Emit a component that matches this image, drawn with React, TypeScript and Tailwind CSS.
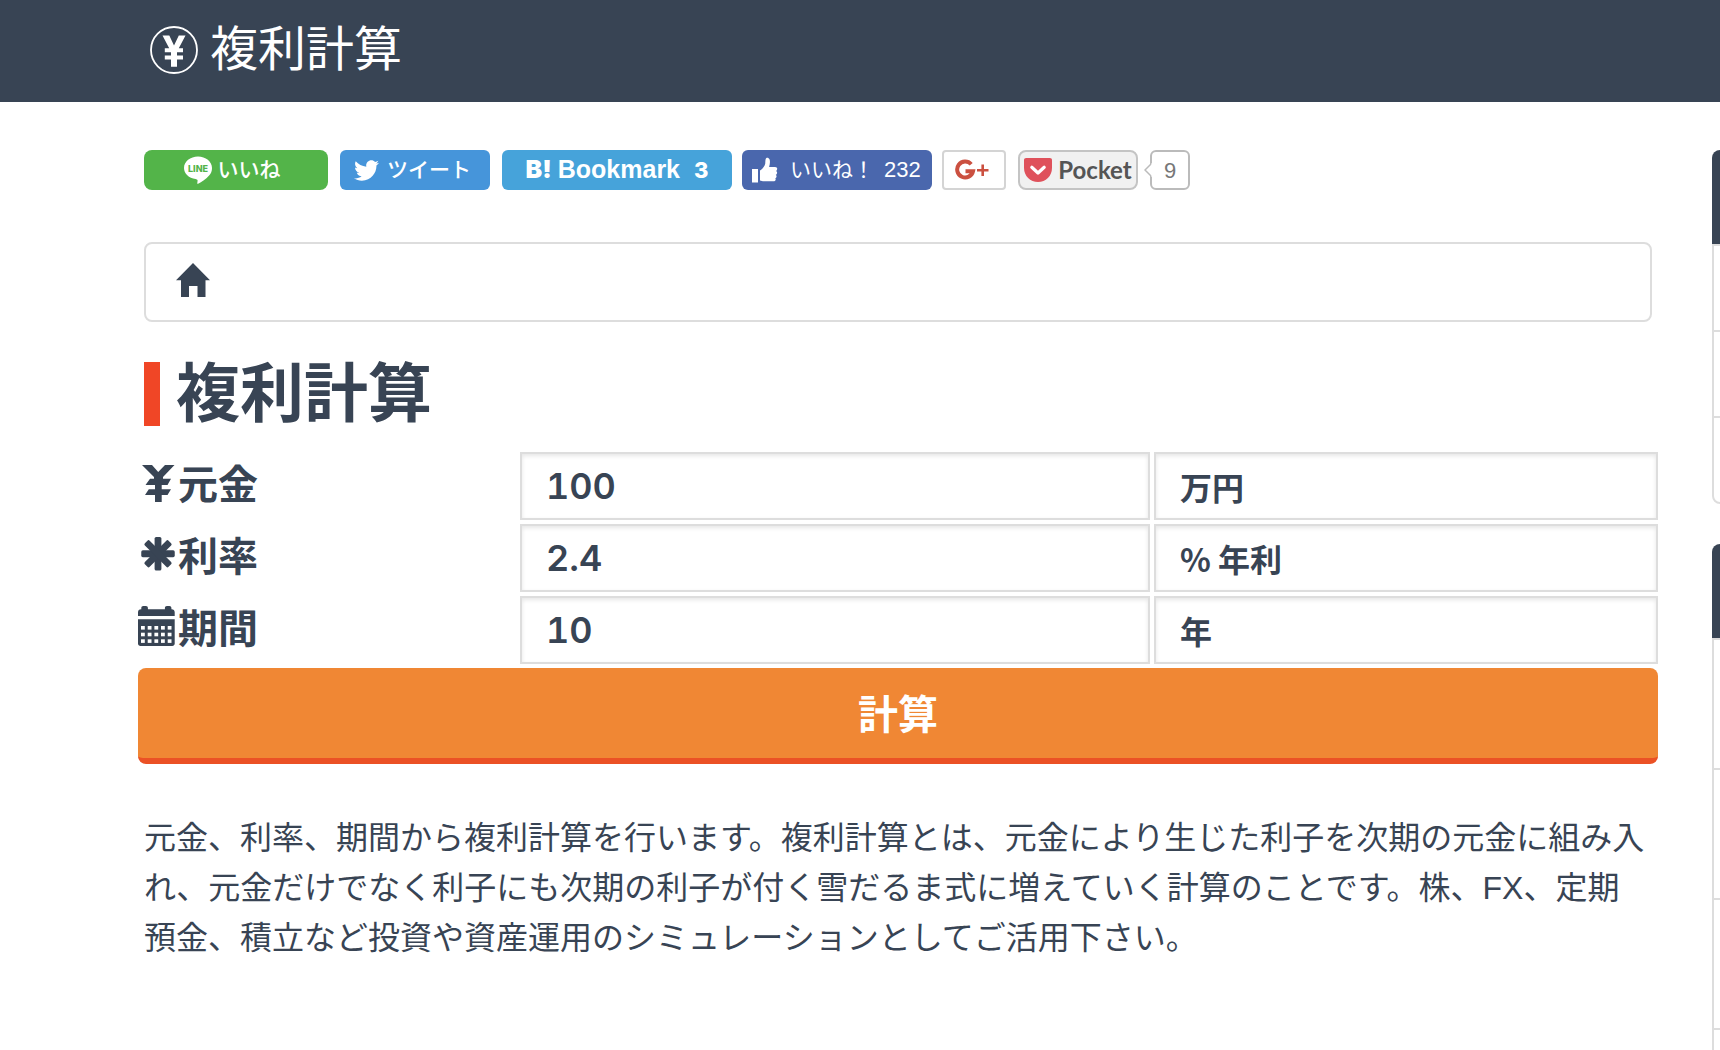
import React from "react";
import { FaTwitter } from "react-icons/fa";

function CircleYen() {
  return (
    <svg viewBox="0 0 48 48" className="h-12 w-12 shrink-0" aria-hidden="true">
      <circle cx="24" cy="24" r="23" fill="none" stroke="#fff" strokeWidth="1.8" />
      <path
        fill="#fff"
        d="M12.500 9.500h6.800L24 19.500l4.800-10h6.700L28.800 22.300H33v4h-6v3.200h6v4h-6v7.200h-6v-7.200h-6.200v-4H21v-3.200h-6.200v-4h4.400z"
      />
    </svg>
  );
}

function LineIcon() {
  return (
    <svg viewBox="0 0 28 28" className="h-7 w-7 shrink-0" aria-hidden="true">
      <path
        fill="#fff"
        d="M14 .5C6.300.5 0 5.500 0 11.900c0 5.600 4.900 10.200 11.600 11.100.8.2 1.700.5 1.900 1.100.2.600-.1 2.200-.2 3.200 0 .500.300.700.8.500 3.500-1.700 8.200-5 11-8.300 1.900-2.100 2.900-4.600 2.900-7.600C28 5.500 21.700.5 14 .5z"
      />
      <text x="14" y="15.500" textAnchor="middle" fontSize="9" className="fill-[#53b449] font-[Inter] font-extrabold">
        LINE
      </text>
    </svg>
  );
}

function ThumbIcon() {
  return (
    <svg viewBox="0 0 26 26" className="h-[26px] w-[26px] shrink-0" fill="#fff" aria-hidden="true">
      <path d="M0 12h6v13.500H0z" />
      <path d="M8 13.500c2.500-1.500 4.500-4.200 5.200-6.800.2-1.700.1-3.600.5-4.800.6-1.700 3-1.500 3.800.4.9 2.300.3 5.100-.4 7.700h6c1.400 0 2.200.8 2.100 2-.1.900-.5 1.500-1.100 1.900.8.5 1.100 1.200 1 2-.1.900-.6 1.500-1.300 1.900.6.500.9 1.100.7 1.900-.1.800-.6 1.300-1.200 1.600.3.500.5 1 .3 1.600-.3.900-1 1.400-2.100 1.400H12c-1.600 0-2.700-.4-4-.8z" />
    </svg>
  );
}

function GooglePlusIcon() {
  return (
    <svg viewBox="0 0 34 22" className="h-[22px] w-[34px] shrink-0" fill="none" stroke="#cb5040" aria-hidden="true">
      <path d="M16.200 5.200A8 8 0 1 0 18 12.200H10.500" strokeWidth="4" />
      <path d="M22 11.300h11.500M27.700 5.500v11.600" strokeWidth="2.600" />
    </svg>
  );
}

function PocketIcon() {
  return (
    <svg viewBox="0 0 28 24" className="h-6 w-7 shrink-0" aria-hidden="true">
      <path fill="#df515b" d="M2.200 0h23.600C27.200 0 28 .9 28 2.200V10c0 8-6.300 14-14 14S0 18 0 10V2.200C0 .9.8 0 2.200 0z" />
      <path d="M7.800 9.300 14 15l6.200-5.700" fill="none" stroke="#fff" strokeWidth="3.200" strokeLinecap="round" strokeLinejoin="round" />
    </svg>
  );
}

function HomeIcon() {
  return (
    <svg viewBox="0 0 34 34" className="h-[34px] w-[34px]" aria-hidden="true">
      <path fill="#384454" d="M17 0l17 17.300h-4.500V34h-8V23h-8.500v11H5V17.300H0z" />
    </svg>
  );
}

function YenIcon() {
  return (
    <svg viewBox="0 0 40 40" className="h-10 w-10 shrink-0" fill="#384454" aria-hidden="true">
      <path d="M4 1h10l6.200 7L27 1h9.500L25 13v1.700h8L29.500 21h-5.800v4.200H33L29.500 31h-5.800v7H17v-7H7l3.800-5.800H17V21H7.500l4.500-6.300h4V13z" />
    </svg>
  );
}

function AsteriskIcon() {
  return (
    <svg viewBox="0 0 40 40" className="h-10 w-10 shrink-0" fill="#384454" aria-hidden="true">
      {[0, 45, 90, 135].map((a) => (
        <rect key={a} x="16.600" y="1" width="6.800" height="33.500" rx="1.600" transform={`rotate(${a} 20 17.750)`} />
      ))}
    </svg>
  );
}

function CalendarIcon() {
  return (
    <svg viewBox="0 0 40 40" className="h-10 w-10 shrink-0 overflow-visible" fill="#384454" aria-hidden="true">
      <path d="M0 8V4.300C0 2.500 1.200 1.300 3 1.300h.3V0c0-1.300.8-2 2-2h2.600c1.300 0 2 .7 2 2v1.300h17V0c0-1.300.8-2 2-2h2.500c1.200 0 2 .7 2 2v1.300h.3c1.800 0 3 1.200 3 3V8z" />
      <path d="M0 11.300h36.700v24.200c0 1.500-1 2.500-2.500 2.500H2.500C1 38 0 37 0 35.500z" />
      {[18, 24.7, 31.3].map((y) =>
        [3, 9.7, 16.4, 23, 29.7].map((x) => <rect key={`${x}-${y}`} x={x} y={y} width="3.800" height="3.600" fill="#fff" />)
      )}
    </svg>
  );
}

const fields = [
  { id: "principal", label: "元金", value: "100", unit: "万円", icon: <YenIcon /> },
  { id: "rate", label: "利率", value: "2.4", unit: "% 年利", icon: <AsteriskIcon /> },
  { id: "period", label: "期間", value: "10", unit: "年", icon: <CalendarIcon /> },
];

function ShareBar() {
  return (
    <div className="flex h-10 items-stretch gap-3 text-white">
      <button className="flex w-[184px] items-center justify-center gap-1.5 rounded-lg bg-[#53b449] pr-2 text-[21px] leading-7 font-medium">
        <LineIcon />
        <span>いいね</span>
      </button>
      <button className="flex w-[150px] items-center gap-2 rounded-md bg-[#4695da] pl-3.5 text-[21px] leading-7 font-medium">
        <FaTwitter size={25} />
        <span>ツイート</span>
      </button>
      <div className="flex gap-2.5">
        <button className="flex w-[230px] items-center justify-center rounded-md bg-[#46a3da] font-[Liberation_Sans] text-[25px] font-bold">
          <span className="mr-1.5 font-[Inter] font-black">B!</span>
          <span>Bookmark</span>
          <span className="ml-3.5 font-[Inter] text-[22px] font-extrabold">3</span>
        </button>
        <button className="flex w-[190px] items-center rounded-md bg-[#4a67ad] pl-2.5 text-[21px] leading-7">
          <ThumbIcon />
          <span className="ml-3">いいね！</span>
          <span className="ml-2.5 font-[Liberation_Sans] text-[22px]">232</span>
        </button>
        <button
          aria-label="Google+"
          className="flex w-16 items-center justify-center rounded-sm border-2 border-[#d4d4d4] bg-white pr-1"
        >
          <GooglePlusIcon />
        </button>
      </div>
      <div className="flex gap-3">
        <button className="flex w-[120px] items-center justify-center gap-1.5 rounded-lg border-2 border-[#c4c4c4] bg-[#f1f1f1] font-[Lato] text-2xl font-bold text-[#555]">
          <PocketIcon />
          <span>Pocket</span>
        </button>
        <div className="relative flex w-10 items-center justify-center rounded-md border-2 border-[#bbb] bg-white font-[Liberation_Sans] text-[22px] text-[#777]">
          <svg viewBox="0 0 8 14" className="absolute top-[11px] -left-2 h-3.5 w-2" aria-hidden="true">
            <path d="M8 0 1 7l7 7z" fill="#fff" />
            <path d="M7 1 1 7l6 6" fill="none" stroke="#bbb" strokeWidth="1.500" />
          </svg>
          9
        </div>
      </div>
    </div>
  );
}

function Sidebar() {
  return (
    <aside className="flex w-2 shrink-0 flex-col gap-10 overflow-hidden">
      <section className="w-80">
        <div className="h-[94px] rounded-t-lg bg-[#384454]" />
        <ul className="rounded-b-lg border-2 border-[#ddd]">
          <li className="h-[86px] border-b-2 border-[#ddd]" />
          <li className="h-[86px] border-b-2 border-[#ddd]" />
          <li className="h-[84px]" />
        </ul>
      </section>
      <section className="flex w-80 flex-1 flex-col">
        <div className="h-[94px] rounded-t-lg bg-[#384454]" />
        <ul className="flex-1 border-2 border-b-0 border-[#ddd]">
          {[0, 1, 2].map((i) => (
            <li key={i} className="h-[130px] border-b-2 border-[#ddd]" />
          ))}
        </ul>
      </section>
    </aside>
  );
}

export default function App() {
  return (
    <div
      lang="ja"
      className="flex min-h-screen flex-col overflow-hidden bg-white font-['Liberation_Sans','Noto_Sans_CJK_JP',sans-serif] text-[#384454]"
    >
      <header className="flex h-[102px] items-center bg-[#384454] pb-0.5 pl-[150px] text-white">
        <a href="#" className="flex items-center gap-3 text-5xl">
          <CircleYen />
          <span>複利計算</span>
        </a>
      </header>
      <div className="flex flex-1 gap-[60px] pt-12 pl-36">
        <main className="min-w-0 flex-1">
          <ShareBar />
          <nav className="mt-[52px] flex h-20 items-start rounded-lg border-2 border-[#ddd] bg-white pt-[19px] pl-[30px]">
            <a href="#" aria-label="ホーム">
              <HomeIcon />
            </a>
          </nav>
          <h1 className="mt-10 border-l-16 border-[#f04626] pl-4 text-[64px] leading-[64px] font-bold">複利計算</h1>
          <form className="-mx-1.5 mt-[26px] flex flex-col gap-1" onSubmit={(e) => e.preventDefault()}>
            {fields.map((f) => (
              <div key={f.id} className="grid h-[68px] grid-cols-[378fr_630fr_504fr] gap-1">
                <label htmlFor={f.id} className="flex items-center pb-1 text-[40px] leading-[60px] font-bold">
                  {f.icon}
                  <span className="pt-0.5">{f.label}</span>
                </label>
                <input
                  id={f.id}
                  defaultValue={f.value}
                  className="min-w-0 border-2 border-[#ddd] bg-white px-6 font-[Inter] text-4xl font-semibold tabular-nums shadow-[inset_0_2px_4px_rgba(0,0,0,0.1)] outline-none"
                />
                <input
                  aria-label={`${f.label}の単位`}
                  readOnly
                  value={f.unit}
                  className="min-w-0 border-2 border-[#ddd] bg-white px-6 font-['Noto_Sans_CJK_JP',sans-serif] text-[32px] font-bold shadow-[inset_0_2px_4px_rgba(0,0,0,0.1)] outline-none"
                />
              </div>
            ))}
            <button className="h-24 rounded-lg border-b-6 border-[#eb5125] bg-[#f08734] pt-1 text-[40px] font-bold text-white">
              計算
            </button>
          </form>
          <p className="mt-[49px] pr-1 text-[32px] leading-[50px]">
            元金、利率、期間から複利計算を行います。複利計算とは、元金により生じた利子を次期の元金に組み入れ、元金だけでなく利子にも次期の利子が付く雪だるま式に増えていく計算のことです。株、FX、定期預金、積立など投資や資産運用のシミュレーションとしてご活用下さい。
          </p>
        </main>
        <Sidebar />
      </div>
    </div>
  );
}
